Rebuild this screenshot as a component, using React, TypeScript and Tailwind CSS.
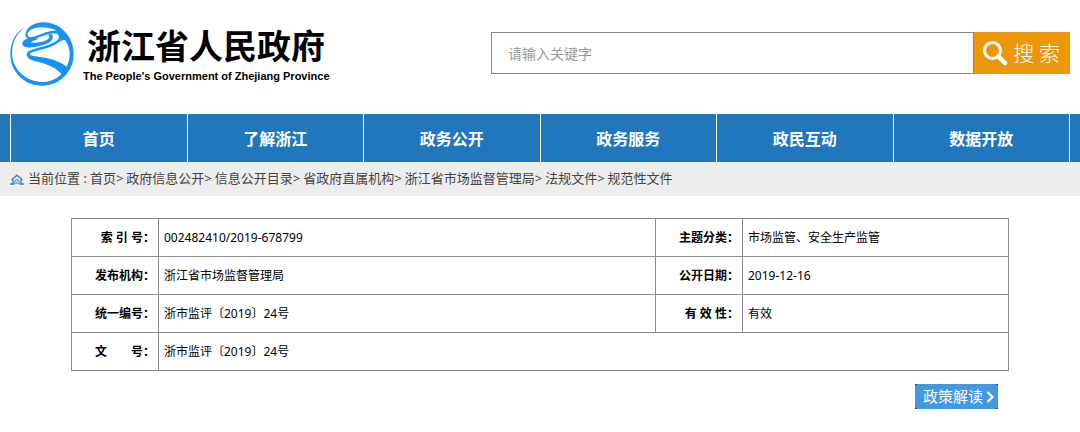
const NAV_ITEMS = ['首页', '了解浙江', '政务公开', '政务服务', '政民互动', '数据开放'];

const CRUMBS = [
  '首页',
  '政府信息公开',
  '信息公开目录',
  '省政府直属机构',
  '浙江省市场监督管理局',
  '法规文件',
  '规范性文件',
];

interface Field {
  label: string;
  value: string;
}

const ROWS: Field[][] = [
  [
    { label: '索 引 号：', value: '002482410/2019-678799' },
    { label: '主题分类：', value: '市场监管、安全生产监管' },
  ],
  [
    { label: '发布机构：', value: '浙江省市场监督管理局' },
    { label: '公开日期：', value: '2019-12-16' },
  ],
  [
    { label: '统一编号：', value: '浙市监评〔2019〕24号' },
    { label: '有 效 性：', value: '有效' },
  ],
  [{ label: '文　　号：', value: '浙市监评〔2019〕24号' }],
];

function Logo() {
  return (
    <svg viewBox="0 0 192 192" className="size-16 shrink-0" fill="#1792fb" aria-hidden="true">
      {/* ring, thin on the left and heavy on the right, open at the top left */}
      <path d="M49 13C20 27 1 58 1 96c0 53 42 95 95 95s95-42 95-95C191 43 150 1 100 1 74 1 52 14 47 33c-3 11 4 19 19 18 26-2 44-18 68-17 9 1 14 2 18 7 17 13 27 32 27 54 0 47-36 85-82 85-51 0-91-41-91-86 0-36 16-63 44-83z M53 40c-2-13 15-24 40-24 20 0 36 4 49 11-11-2-22 0-35 4-19 6-49 24-54 9z" fillRule="evenodd" />
      {/* upper bend */}
      <path d="M60 46C48 50 37 57 37 65c0 11 19 13 38 10 23-3 45-11 52-23 4-7 1-14-5-18l-8 4c5 3 5 8 1 12-10 9-32 13-52 12 0-5 14-7 24-12z" />
      {/* lower bend, widening to the right */}
      <path d="M132 26c16 0 30 8 38 20 1 3 0 6-3 8-10-1-16 3-25 10-18 12-43 18-63 23-13 3-20 6-20 10 1 5 18 6 36 9 29 4 58 14 79 31-2 9-8 18-15 25-14-20-38-33-65-40-20-5-38-8-43-20-4-12 8-18 24-22 24-6 51-12 67-25 7-7 8-16-10-29z" />
    </svg>
  );
}

function SearchIcon() {
  return (
    <svg viewBox="0 0 26 26" className="size-[26px]" fill="none" stroke="white" aria-hidden="true">
      <circle cx="10.5" cy="10.5" r="8" strokeWidth="3" />
      <path d="M16.5 16.5 23 23" strokeWidth="4.5" strokeLinecap="round" />
    </svg>
  );
}

function HomeIcon() {
  return (
    <svg viewBox="0 0 14 11" className="h-[11px] w-[14px]" fill="none" stroke="#3583c4" aria-hidden="true">
      <path d="M0 10h4.5M9.5 10H14" strokeWidth="1.5" />
      <path d="M1.5 6 7 1.2 12.5 6M3 9.5V5.8M11 9.5V5.8" strokeWidth="1.4" />
      <path d="M5 10V7.5a2 2 0 0 1 4 0V10M7 7.5V10" strokeWidth="1" />
    </svg>
  );
}

function Cells({ field, span }: { field: Field; span: number }) {
  return (
    <>
      <th scope="row" className="border border-[#8c8c8c] pr-[3px] text-right font-bold whitespace-nowrap">
        {field.label}
      </th>
      <td colSpan={span} className="border border-[#8c8c8c] px-[5px]">
        {field.value}
      </td>
    </>
  );
}

export default function App() {
  return (
    <div className="min-h-screen bg-white font-['Noto_Sans','Noto_Sans_CJK_SC',sans-serif] text-black">
      <header className="flex items-start justify-between gap-8 px-[10px] pt-[22px] pb-7">
        <a href="#" className="flex gap-[9px]">
          <Logo />
          <span className="flex flex-col">
            <span className="pl-1 font-['Noto_Sans_CJK_SC',sans-serif] text-[34px] leading-[46px] font-bold whitespace-nowrap">
              浙江省人民政府
            </span>
            <span className="font-['Liberation_Sans',sans-serif] text-[11px] leading-4 font-bold whitespace-nowrap">
              The People's Government of Zhejiang Province
            </span>
          </span>
        </a>
        <form className="mt-[10px] flex h-[42px] max-w-[579px] flex-1" onSubmit={(e) => e.preventDefault()}>
          <input
            type="text"
            aria-label="请输入关键字"
            placeholder="请输入关键字"
            className="min-w-0 flex-1 border border-[#858585] px-4 text-[14px] outline-none placeholder:text-[#999999]"
          />
          <button
            type="submit"
            className="flex shrink-0 items-center gap-[5px] bg-[#ec960c] pr-[10px] pl-2 font-['Noto_Sans_CJK_SC',sans-serif] text-[21px] font-light whitespace-nowrap text-white"
          >
            <SearchIcon />
            搜 索
          </button>
        </form>
      </header>

      <nav className="bg-[#2177be] px-[10px]">
        <ul className="flex border-l border-white">
          {NAV_ITEMS.map((item) => (
            <li key={item} className="flex-1 border-r border-white">
              <a
                href="#"
                className="block py-1 text-center font-['Noto_Sans_CJK_SC',sans-serif] text-[16px] leading-10 font-bold text-white"
              >
                {item}
              </a>
            </li>
          ))}
        </ul>
      </nav>

      <div className="flex h-[34px] items-center bg-[#ededed] px-[10px] text-[13px] text-[#444444]">
        <HomeIcon />
        <span className="ml-1">当前位置 :</span>
        <ol className="ml-[3px] flex gap-[3px]">
          {CRUMBS.map((crumb, i) => (
            <li key={crumb}>
              <a href="#">{crumb}</a>
              {i < CRUMBS.length - 1 && '>'}
            </li>
          ))}
        </ol>
      </div>

      <main className="px-[71px] pt-[22px]">
        <table className="w-full table-fixed border-collapse text-[12px] leading-4">
          <colgroup>
            <col className="w-[87px]" />
            <col />
            <col className="w-[87px]" />
            <col className="w-[266px]" />
          </colgroup>
          <tbody>
            {ROWS.map((row) => (
              <tr key={row[0].label} className="h-[38px]">
                {row.map((field) => (
                  <Cells key={field.label} field={field} span={row.length === 1 ? 3 : 1} />
                ))}
              </tr>
            ))}
          </tbody>
        </table>
        <div className="mt-[13px] flex justify-end pr-[11px]">
          <a href="#" className="bg-[#1d2f3f] text-[15px] leading-[25px] text-white">
            <span className="flex items-center gap-[3px] rounded-[3px] bg-[#4399df] pr-1 pl-2">
              政策解读
              <svg viewBox="0 0 8 12" className="h-3 w-2" fill="none" stroke="white" aria-hidden="true">
                <path d="M1.5 1 6.5 6l-5 5" strokeWidth="2.2" />
              </svg>
            </span>
          </a>
        </div>
      </main>
    </div>
  );
}
